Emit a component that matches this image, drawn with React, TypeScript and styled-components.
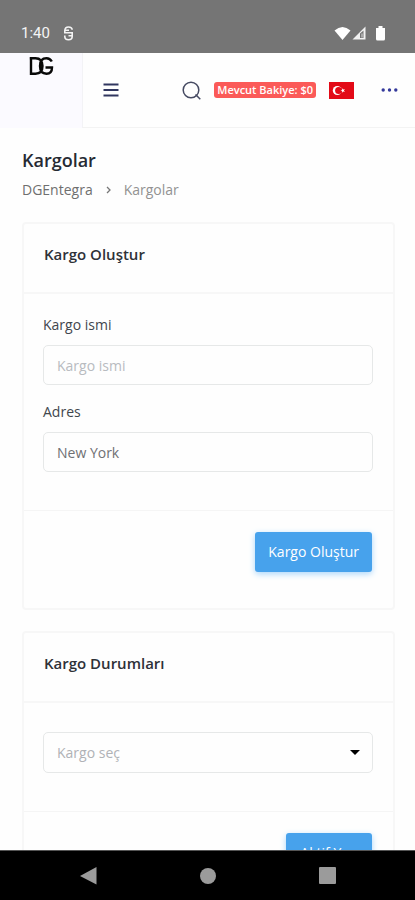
import React from "react";
import styled, { createGlobalStyle } from "styled-components";

const GlobalStyle = createGlobalStyle`
  *, *::before, *::after { box-sizing: border-box; }
  body {
    margin: 0;
    background: #fefefe;
    color: #41464d;
    font-family: "Open Sans", "Noto Sans", sans-serif;
    font-size: 14px;
    line-height: 20px;
  }
  button, input, select { font: inherit; }
`;

const Screen = styled.div`
  display: flex;
  flex-direction: column;
  height: 100vh;
  overflow: hidden;
`;

const StatusBar = styled.div`
  display: flex;
  flex: none;
  align-items: center;
  justify-content: space-between;
  height: 53px;
  padding: 13px 28px 0 21px;
  background: #757575;
  color: #f4f4f4;
  font-family: Roboto, sans-serif;
  font-size: 15px;
`;

const StatusGroup = styled.div<{ $gap: number }>`
  display: flex;
  align-items: center;
  gap: ${(p) => p.$gap}px;
`;

const TopBar = styled.header`
  display: flex;
  flex: none;
  height: 75px;
`;

const Brand = styled.a`
  flex: none;
  width: 82px;
  padding: 3px 0 0 28px;
  background: #fbfaff;
  line-height: 0;
`;

const Tools = styled.div`
  display: flex;
  flex: 1;
  align-items: center;
  padding: 0 17px 0 20px;
  border-left: 1px solid #f3f3f6;
  border-bottom: 1px solid #f3f3f3;
`;

const IconButton = styled.button`
  display: flex;
  align-items: center;
  justify-content: center;
  padding: 0;
  border: 0;
  background: none;
  cursor: pointer;
`;

const ToolGroup = styled.div`
  display: flex;
  align-items: center;
  margin-left: auto;
  gap: 13px;
`;

const Balance = styled.span`
  padding: 0 3px;
  border-radius: 3px;
  background: #fb5a58;
  color: #fff;
  font-size: 11px;
  font-weight: 600;
  line-height: 16px;
  white-space: nowrap;
`;

const MoreSlot = styled.div`
  margin-left: 14px;
`;

const Content = styled.main`
  flex: 1;
  min-height: 0;
  overflow: hidden;
  padding: 20px 20px 0 22px;
`;

const PageTitle = styled.h1`
  margin: 0;
  color: #262a33;
  font-size: 18px;
  font-weight: 600;
  line-height: 24px;
`;

const Breadcrumb = styled.nav`
  display: flex;
  align-items: center;
  gap: 12px;
  margin: 8px 0 22px;
  color: #929292;
`;

const Crumb = styled.a`
  color: #6f6f6f;
  text-decoration: none;
`;

const Card = styled.section`
  margin-bottom: 21px;
  border: 2px solid #f7f7f7;
  border-radius: 4px;
`;

const CardHeader = styled.div`
  padding: 19px 20px 21px;
  border-bottom: 2px solid #f7f7f7;
`;

const CardTitle = styled.h2`
  margin: 0;
  color: #2e3138;
  font-size: 15px;
  font-weight: 600;
  line-height: 22px;
  height: 28px;
`;

const CardBody = styled.div<{ $top: number }>`
  display: flex;
  flex-direction: column;
  gap: 17px;
  padding: ${(p) => p.$top}px 20px 38px 19px;
`;

const Field = styled.div`
  display: flex;
  flex-direction: column;
  gap: 10px;
`;

const TextInput = styled.input`
  width: 100%;
  height: 40px;
  padding: 0 13px;
  border: 1px solid #e6e8e8;
  border-radius: 5px;
  background: #fefefe;
  color: #6f7073;
  outline: 0;
  &::placeholder { color: #b8bbc0; opacity: 1; }
`;

const SelectBox = styled.div`
  display: grid;
  align-items: center;
  & > * { grid-area: 1 / 1; }
  & > svg { justify-self: end; margin-right: 13px; pointer-events: none; }
`;

const Select = styled.select`
  width: 100%;
  height: 41px;
  padding: 0 13px;
  border: 1px solid #e6e8e8;
  border-radius: 5px;
  background: #fefefe;
  color: #b0b2b6;
  appearance: none;
  outline: 0;
`;

const CardFooter = styled.div`
  display: flex;
  justify-content: flex-end;
  padding: 21px 21px 36px;
  border-top: 1px solid #f5f5f5;
`;

const PrimaryButton = styled.button`
  min-width: 86px;
  height: 40px;
  padding: 0 13px;
  border: 0;
  border-radius: 3px;
  background: #47a2ec;
  box-shadow: 0 2px 6px #a9d6fb;
  color: #fff;
  cursor: pointer;
`;

const SystemNav = styled.nav`
  display: flex;
  flex: none;
  align-items: center;
  justify-content: space-around;
  height: 50px;
  padding: 0 28px;
  border-top: 1px solid #555;
  background: #000;
`;

export default function App() {
  return (
    <>
      <GlobalStyle />
      <Screen>
        <StatusBar>
          <StatusGroup $gap={13}>
            <span>1:40</span>
            <svg width="11" height="15" viewBox="0 0 11 15" fill="none" stroke="#f4f4f4" strokeWidth="1.6">
              <path d="M9.200 3.800Q9 1 5.500 1T1.800 4.500V6.800H9.200V10.500Q9.200 13.800 5.500 13.800T1.800 10.500V9.500M1.800 4.200H6M5.500 9.800H9" />
            </svg>
          </StatusGroup>
          <StatusGroup $gap={1}>
            <svg width="17" height="15" viewBox="0 0 17 15" fill="#fff">
              <path d="M.5 4.500Q8.500-2.500 16.500 4.500L8.500 14Z" />
            </svg>
            <svg width="14" height="14" viewBox="0 0 14 14">
              <path d="M13.500 .5V13.500H.5Z" fill="#f2f2f2" />
              <path d="M8 7.500 11.500 4.500V12H8Z" fill="#757575" />
              <path d="M10 7.500v4" stroke="#ddd" />
            </svg>
            <svg width="20" height="15" viewBox="0 0 20 15" fill="#fff">
              <path d="M11.500 0h4v2H18v11q0 1.500-1.500 1.500h-6Q9 14.500 9 13V2h2.500Z" />
            </svg>
          </StatusGroup>
        </StatusBar>

        <TopBar>
          <Brand href="#" aria-label="DGEntegra">
            <svg width="27" height="20" viewBox="0 0 27 20" fill="none" stroke="#080808" strokeWidth="2.400">
              <path d="M3 2.300V17.700H7.500Q14.500 17.700 14.500 10T7.500 2.300H1.700M23.800 5.500Q22 2.300 18.500 2.300 12 2.300 12 10t6.500 7.700q5.500 0 5.500-6.200h-6.500" />
            </svg>
          </Brand>
          <Tools>
            <IconButton aria-label="Menu">
              <svg width="16" height="14" viewBox="0 0 16 14" stroke="#30365f" strokeWidth="2">
                <path d="M.5 1.500h15M.5 7h15M.5 12.500h15" />
              </svg>
            </IconButton>
            <ToolGroup>
              <IconButton aria-label="Ara">
                <svg width="19" height="19" viewBox="0 0 19 19" fill="none" stroke="#464a62" strokeWidth="1.500">
                  <circle cx="9" cy="9" r="7.800" />
                  <path d="m13.500 13.500 4.800 4.800" />
                </svg>
              </IconButton>
              <Balance>Mevcut Bakiye: $0</Balance>
              <IconButton aria-label="Türkçe">
                <svg width="25" height="17" viewBox="0 0 25 17">
                  <path fill="#e30a17" d="M0 0h25v17H0z" />
                  <circle cx="8.300" cy="8.500" r="4.500" fill="#fff" />
                  <circle cx="9.600" cy="8.500" r="3.500" fill="#e30a17" />
                  <path fill="#fff" d="m11.500 8.500 1.600-.6.100-1.700 1.100 1.400 1.600-.5-1 1.400 1 1.400-1.600-.5-1.100 1.400-.1-1.700Z" />
                </svg>
              </IconButton>
              <MoreSlot>
                <IconButton aria-label="Daha fazla">
                  <svg width="17" height="4" viewBox="0 0 17 4" fill="#34399b">
                    <circle cx="2.200" cy="2" r="1.700" />
                    <circle cx="8.500" cy="2" r="1.700" />
                    <circle cx="14.800" cy="2" r="1.700" />
                  </svg>
                </IconButton>
              </MoreSlot>
            </ToolGroup>
          </Tools>
        </TopBar>

        <Content>
          <PageTitle>Kargolar</PageTitle>
          <Breadcrumb aria-label="Konum">
            <Crumb href="#">DGEntegra</Crumb>
            <svg width="7" height="8" viewBox="0 0 7 8" fill="none" stroke="#777" strokeWidth="1.300">
              <path d="m2 1 3 3-3 3" />
            </svg>
            <span>Kargolar</span>
          </Breadcrumb>

          <Card>
            <CardHeader>
              <CardTitle>Kargo Oluştur</CardTitle>
            </CardHeader>
            <CardBody $top={21}>
              <Field>
                <label htmlFor="name">Kargo ismi</label>
                <TextInput id="name" placeholder="Kargo ismi" />
              </Field>
              <Field>
                <label htmlFor="address">Adres</label>
                <TextInput id="address" defaultValue="New York" />
              </Field>
            </CardBody>
            <CardFooter>
              <PrimaryButton>Kargo Oluştur</PrimaryButton>
            </CardFooter>
          </Card>

          <Card>
            <CardHeader>
              <CardTitle>Kargo Durumları</CardTitle>
            </CardHeader>
            <CardBody $top={29}>
              <SelectBox>
                <Select aria-label="Kargo seç" defaultValue="">
                  <option value="">Kargo seç</option>
                </Select>
                <svg width="10" height="5" viewBox="0 0 10 5">
                  <path d="M0 0h10L5 5Z" />
                </svg>
              </SelectBox>
            </CardBody>
            <CardFooter>
              <PrimaryButton>Aktif Yap</PrimaryButton>
            </CardFooter>
          </Card>
        </Content>

        <SystemNav aria-label="Sistem">
          <IconButton aria-label="Geri">
            <svg width="17" height="18" viewBox="0 0 17 18" fill="#9b9b9b">
              <path d="M16.500 0v17.500L0 9Z" />
            </svg>
          </IconButton>
          <IconButton aria-label="Ana ekran">
            <svg width="16" height="16" viewBox="0 0 16 16" fill="#9b9b9b">
              <circle cx="8" cy="8" r="8" />
            </svg>
          </IconButton>
          <IconButton aria-label="Son uygulamalar">
            <svg width="17" height="17" viewBox="0 0 17 17" fill="#9b9b9b">
              <rect width="17" height="17" rx="1" />
            </svg>
          </IconButton>
        </SystemNav>
      </Screen>
    </>
  );
}
